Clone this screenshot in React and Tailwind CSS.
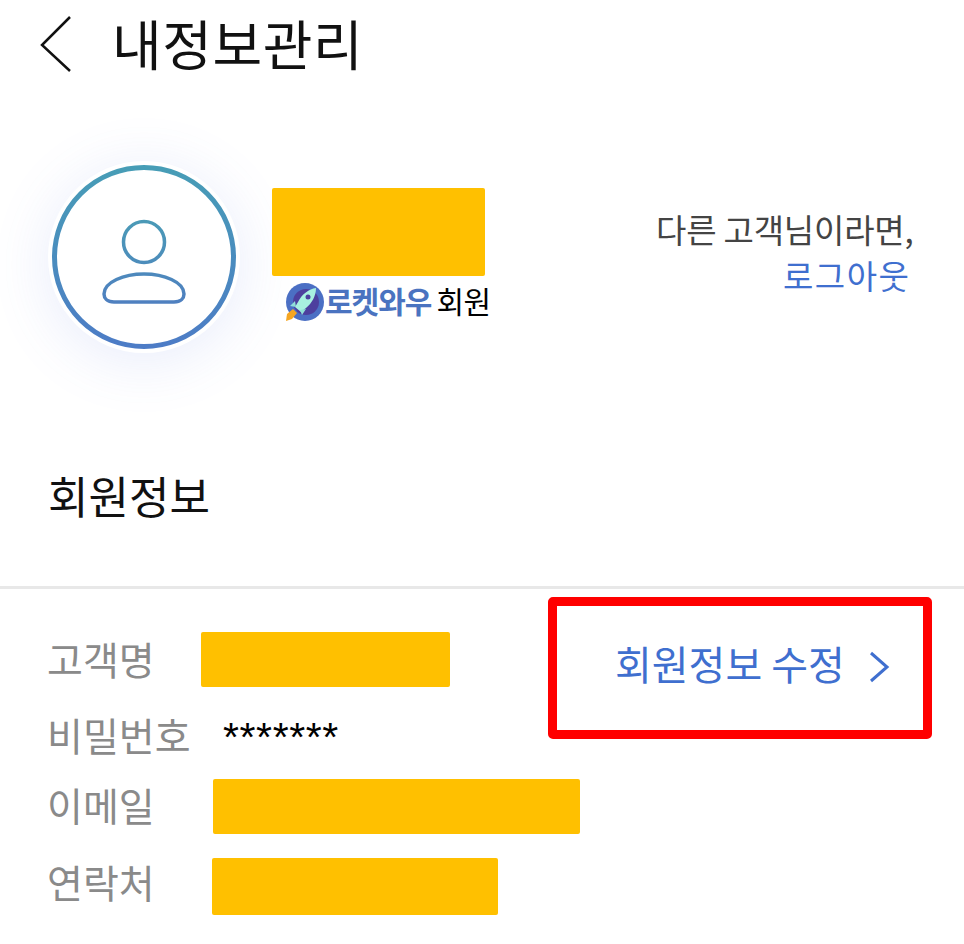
import React from "react";

const KR = { fontFamily: '"Noto Sans CJK KR", "Noto Sans", sans-serif' };

const RocketLogo = () => (
  <svg width="42" height="40" viewBox="0 0 42 40" className="shrink-0">
    <circle cx="22" cy="19" r="19" fill="#4b6fc4" />
    <circle cx="23" cy="19" r="13" fill="#4d3f9e" />
    <path d="M33 5 C26 6 19 11 15 19 L12 24 L18 29 L23 25 C29 20 33 13 33 5 Z" fill="#a8f0e0" />
    <path d="M12 18 L7 23 L13 24 Z M23 26 L19 32 L17 27 Z" fill="#8fe0d8" />
    <circle cx="25" cy="14" r="2.5" fill="#4d3f9e" />
    <path d="M10 26 L14 30 L9 36 L3 38 L4 31 Z" fill="#f5a623" />
  </svg>
);

const Avatar = () => (
  <div className="w-[192px] h-[192px] rounded-full bg-white shadow-[0_8px_60px_rgba(90,120,230,0.14)] shrink-0">
    <svg width="192" height="192" viewBox="0 0 192 192">
      <defs>
        <linearGradient id="ring" x1="0" y1="0" x2="0" y2="1">
          <stop offset="0" stopColor="#479db6" />
          <stop offset="1" stopColor="#4d7cc6" />
        </linearGradient>
        <linearGradient id="person" gradientUnits="userSpaceOnUse" x1="0" y1="55" x2="0" y2="145">
          <stop offset="0" stopColor="#4a9bb6" />
          <stop offset="1" stopColor="#4f7fc0" />
        </linearGradient>
      </defs>
      <circle cx="96" cy="96" r="89.5" fill="#fff" stroke="url(#ring)" strokeWidth="5" />
      <circle cx="96" cy="81" r="20.5" fill="none" stroke="url(#person)" strokeWidth="3.5" />
      <path
        d="M66 141 C59 141 56 137 56 133 C56 121 76 113 96 113 C116 113 136 121 136 133 C136 137 133 141 126 141 Z"
        fill="none"
        stroke="url(#person)"
        strokeWidth="3.5"
        strokeLinejoin="round"
      />
    </svg>
  </div>
);

const Masked = ({ className }) => <div className={`bg-[#ffc000] rounded-[2px] shrink-0 ${className}`} />;

export default function App() {
  return (
    <div style={KR} className="w-[964px] h-[944px] bg-white overflow-hidden">
      {/* header */}
      <div className="flex items-center h-[86px] pl-[38px]">
        <svg width="36" height="60" viewBox="0 0 36 60" className="shrink-0">
          <path d="M32 4 L4 32 L32 58" fill="none" stroke="#111" strokeWidth="2.5" />
        </svg>
        <h1 className="ml-[38px] text-[54px] leading-[60px] font-normal text-[#111] tracking-[0.6px]">내정보관리</h1>
      </div>

      {/* profile */}
      <div className="flex mt-[75px] pl-[48px]">
        <Avatar />
        <div className="ml-[32px] mt-[27px] w-[240px]">
          <Masked className="w-[213px] h-[88px]" />
          <div className="flex items-center mt-[6px] ml-[11px]">
            <RocketLogo />
            <span className="pb-[6px] text-[30px] leading-[36px] font-bold text-[#4a73c0] tracking-[-1px] whitespace-nowrap">로켓와우</span>
            <span className="pb-[6px] ml-[5px] text-[30px] leading-[36px] text-black tracking-[-0.5px] whitespace-nowrap">회원</span>
          </div>
        </div>
        <div className="ml-[144px] mt-[45px] w-[260px] text-[33px] leading-[46px] whitespace-nowrap">
          <div className="text-[#444] tracking-[-0.2px]">다른 고객님이라면,</div>
          <div className="ml-[127px] text-[#3f6fcf] tracking-[1.5px]">로그아웃</div>
        </div>
      </div>

      {/* section title */}
      <h2 className="mt-[117px] ml-[48px] text-[44px] leading-[50px] font-normal text-[#111]">회원정보</h2>

      <div className="mt-[66px] h-[3px] bg-[#e8e8e8]" />

      {/* info */}
      <div className="flex">
        <div className="w-[548px] pl-[47px] pt-[43px] text-[39px] text-[#8a8a8a]">
          <div className="flex items-center h-[55px]">
            <span className="w-[154px] shrink-0 pb-[2px]">고객명</span>
            <Masked className="w-[249px] h-[55px]" />
          </div>
          <div className="flex items-center h-[55px] mt-[20px]">
            <span className="w-[176px] shrink-0">비밀번호</span>
            <span className="text-[41px] text-black tracking-[0.6px] pt-[6px]" style={{ fontFamily: '"Liberation Sans", sans-serif' }}>*******</span>
          </div>
          <div className="flex items-center h-[55px] mt-[17px]">
            <span className="w-[166px] shrink-0 pb-[4px]">이메일</span>
            <Masked className="w-[367px] h-[55px]" />
          </div>
          <div className="flex items-center h-[57px] mt-[24px]">
            <span className="w-[165px] shrink-0 pb-[10px]">연락처</span>
            <Masked className="w-[286px] h-[57px]" />
          </div>
        </div>
        <div className="mt-[8px] w-[384px] h-[142px] border-[9px] border-[#ff0000] rounded-[5px] flex items-center pl-[58px]">
          <span className="pb-[10px] text-[40px] leading-[50px] text-[#3f6fcf] whitespace-nowrap">회원정보 수정</span>
          <svg width="24" height="36" viewBox="0 0 24 36" className="ml-[22px] mb-[2px] shrink-0">
            <path d="M4 4 L20 18 L4 32" fill="none" stroke="#3f6fcf" strokeWidth="3" />
          </svg>
        </div>
      </div>
    </div>
  );
}
